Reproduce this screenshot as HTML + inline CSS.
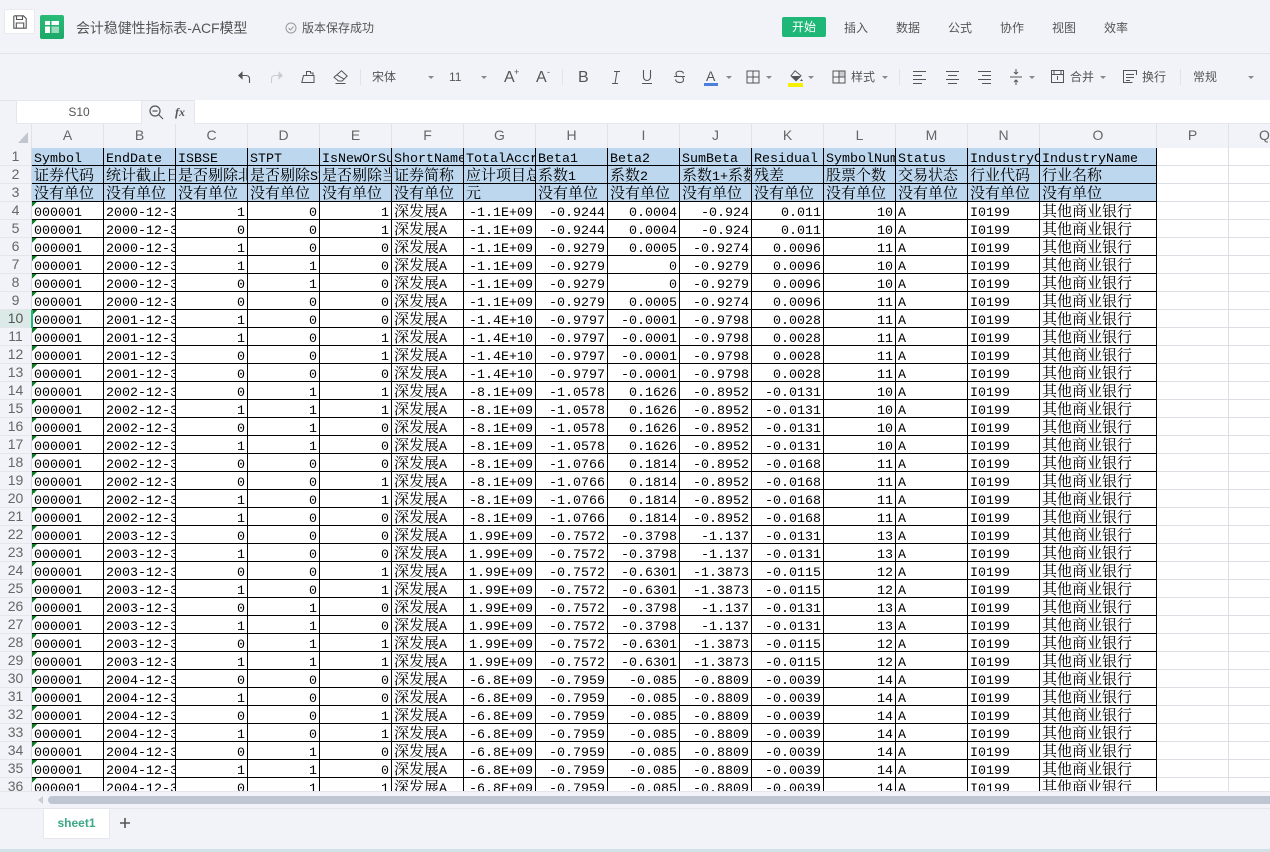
<!DOCTYPE html>
<html lang="zh"><head><meta charset="utf-8"><title>会计稳健性指标表-ACF模型</title>
<style>
html,body{margin:0;padding:0;width:1270px;height:852px;overflow:hidden;background:#f1f3f8;font-family:"Liberation Sans","Noto Sans CJK SC",sans-serif;color:#555}
.a{position:absolute}
.t{position:absolute;white-space:nowrap;font-size:12px;line-height:16px;color:#555}
svg{position:absolute;overflow:visible}
.sep{position:absolute;top:69px;width:1px;height:16px;background:#dfe2e8}
.car{position:absolute;top:76px;width:0;height:0;border-left:3.5px solid transparent;border-right:3.5px solid transparent;border-top:3.5px solid #888}
.ch{position:absolute;top:124px;height:24px;line-height:23px;text-align:center;font-size:14px;color:#666;border-right:1px solid #dfe2e7;box-sizing:border-box}
#rh{position:absolute;left:0;top:148px;width:32px;height:643px;overflow:hidden;background:#f1f3f8;border-right:1px solid #d5d9df;box-sizing:border-box}
#rh div{height:17px;border-bottom:1px solid #e3e6eb;line-height:17px;text-align:center;font-size:14px;color:#666;width:31px}
#rh div.on{background:#dbeae6;color:#555}
#g{position:absolute;left:32px;top:148px;width:1238px;height:643px;overflow:hidden;background:#fff}
table{display:block;width:1300px;position:absolute;left:0;top:0}
colgroup{display:none}
tbody{display:block}
tr{display:flex;height:18px}
td{display:block;flex:none;width:72px;height:18px;box-sizing:border-box;padding:0 0 0 2px;border-right:1px solid #000;border-bottom:1px solid #000;overflow:hidden;white-space:nowrap;font:13.33px/23px "Liberation Mono",monospace;color:#000}
td:nth-child(15){width:117px}
td.c{font:15px/18px "WenQuanYi Zen Hei","Noto Serif CJK SC",serif}
td b{font:13.33px/0 "Liberation Mono",monospace}
td.r{text-align:right;padding:0 2px 0 0}
tr.h td{background:#bdd7ee}
td:first-child{background:linear-gradient(135deg,#0a7d22 50%,transparent 50%) 0 0/5px 5px no-repeat}
tr.h td:first-child{background:#bdd7ee}
td.e,tr.h td.e{border-right:1px solid #dcdfe3;border-bottom:1px solid #dcdfe3;background:#fff}
</style></head><body>
<div class="a" style="left:0;top:53px;width:1270px;height:1px;background:#e0e3e9"></div>
<div class="a" style="left:4px;top:9px;width:31px;height:25px;background:#fff;border:1px solid #e8eaee;box-sizing:border-box;border-radius:2px"></div>
<svg style="left:13px;top:15px" width="14" height="14" viewBox="0 0 14 14" fill="none" stroke="#555" stroke-width="1.1"><path d="M1.500.8h9l2.700 2.700v9.700H.8V1.500z"/><path d="M3.500 1v3.500h6V1M3.300 13V8h7.400v5"/></svg>
<div class="a" style="left:40px;top:15px;width:24px;height:24px;border-radius:2px;background:linear-gradient(180deg,#29bb78,#1da968)"></div>
<svg style="left:45px;top:21px" width="14" height="12"><path d="M0 0h5v4H0zM6.500 0H14v4H6.500zM0 5.500h5V12H0z" fill="#fff"/><path d="M6.500 5.500H14V12H6.500z" fill="#fff" opacity=".55"/></svg>
<div class="t" style="left:76px;top:19px;font-size:14px;line-height:18px;color:#555;letter-spacing:-.1px">会计稳健性指标表-ACF模型</div>
<svg style="left:285px;top:22px" width="12" height="12" fill="none" stroke="#999"><circle cx="6" cy="6" r="5"/><path d="M3.500 6l2 2 3-3.500"/></svg>
<div class="t" style="left:302px;top:20px">版本保存成功</div>
<div class="a" style="left:782px;top:17px;width:44px;height:20px;background:#1fb777;border-radius:2px;color:#fff;font-size:12px;line-height:20px;text-align:center">开始</div>
<div class="t" style="left:844px;top:20px">插入</div><div class="t" style="left:896px;top:20px">数据</div><div class="t" style="left:948px;top:20px">公式</div><div class="t" style="left:1000px;top:20px">协作</div><div class="t" style="left:1052px;top:20px">视图</div><div class="t" style="left:1104px;top:20px">效率</div>

<svg style="left:238px;top:71px" width="13" height="13" fill="none" stroke="#555" stroke-width="1.1"><path d="M3 4.500h5c2.500 0 3.500 1.500 3.500 3.500v4"/><path d="M4 1.500L.8 4.500 4 7.500z" fill="#555"/></svg>
<svg style="left:270px;top:71px" width="13" height="13" fill="none" stroke="#c8ccd3" stroke-width="1.1"><path d="M10 4.500H5C2.500 4.500 1.500 6 1.500 8v4"/><path d="M9 1.500l3.200 3L9 7.500z" fill="#c8ccd3"/></svg>
<svg style="left:301px;top:70px" width="14" height="14" fill="none" stroke="#555" stroke-width="1"><path d="M2.500 5.500h10.500v7H.8zM5.500 5.500V1.500h4v1.500h2.500v2.500M1 12.500h12"/></svg>
<svg style="left:333px;top:70px" width="15" height="14" fill="none" stroke="#555" stroke-width="1"><path d="M8.500.8l5.700 5.200-5 5H5.500L1 7.300zM3.800 4.800l7.400 4.400M2.500 13.500h10"/></svg>
<div class="sep" style="left:360px"></div>
<div class="t" style="left:372px;top:69px">宋体</div><div class="car" style="left:428px"></div>
<div class="t" style="left:449px;top:69px">11</div><div class="car" style="left:481px"></div>
<div class="t" style="left:504px;top:69px;font-size:16px;line-height:17px">A</div><div class="t" style="left:514px;top:64px;font-size:9px">+</div>
<div class="t" style="left:536px;top:69px;font-size:16px;line-height:17px">A</div><div class="t" style="left:547px;top:64px;font-size:9px">-</div>
<div class="sep" style="left:562px"></div>
<div class="t" style="left:578px;top:69px;font-size:16px;line-height:17px">B</div>
<svg style="left:612px;top:71px" width="8" height="13" fill="none" stroke="#555" stroke-width="1"><path d="M2 .5h6M0 12.500h6M5 .5L3 12.500"/></svg>
<svg style="left:642px;top:70px" width="10" height="14" fill="none" stroke="#555" stroke-width="1.1"><path d="M1.500 0v7a3.500 3.500 0 0 0 7 0V0M0 13.500h10"/></svg>
<svg style="left:674px;top:70px" width="11" height="14" fill="none" stroke="#555" stroke-width="1.1"><path d="M9.500 3.500C9 .5 2 .5 2 3.500c0 1 .5 2 1 3M8.500 7c1 1 1 2 1 3 0 3.500-7.500 3.500-8-.5M0 6.500h11"/></svg>
<div class="t" style="left:706px;top:68px;font-size:14px">A</div><div class="a" style="left:704px;top:83px;width:14px;height:3px;background:#4a7fdc"></div><div class="car" style="left:726px"></div>
<svg style="left:746px;top:70px" width="14" height="14" fill="none" stroke="#555" stroke-width="1"><path d="M1 1h12v12H1zM7 1v12M1 7h12"/></svg><div class="car" style="left:766px"></div>
<svg style="left:789px;top:70px" width="14" height="13" fill="#555"><path d="M6 .8l6 5-5 5-5-5z" fill="none" stroke="#555"/><path d="M2 6h10l-5 5zM12.500 9l1.500 2h-3z"/></svg><div class="a" style="left:788px;top:83px;width:15px;height:4px;background:#f5f000"></div><div class="car" style="left:808px"></div>
<svg style="left:832px;top:70px" width="14" height="14" fill="none" stroke="#555" stroke-width="1"><path d="M7 1h6v6H7z" fill="#c8ccd4"/><path d="M1 1h12v12H1zM7 1v12M1 7h12"/></svg>
<div class="t" style="left:851px;top:69px">样式</div><div class="car" style="left:882px"></div>
<div class="sep" style="left:899px"></div>
<svg style="left:913px;top:70px" width="13" height="14" stroke="#555"><path d="M0 1.500h13M0 5.500h9M0 9.500h13M0 13.500h9"/></svg>
<svg style="left:946px;top:70px" width="13" height="14" stroke="#555"><path d="M0 1.500h13M2 5.500h9M0 9.500h13M2 13.500h9"/></svg>
<svg style="left:978px;top:70px" width="13" height="14" stroke="#555"><path d="M0 1.500h13M4 5.500h9M0 9.500h13M4 13.500h9"/></svg>
<svg style="left:1010px;top:69px" width="12" height="16" fill="none" stroke="#555"><path d="M0 8h12M6 0v5M6 11v5M4 3l2 2 2-2M4 13l2-2 2 2"/></svg><div class="car" style="left:1029px"></div>
<svg style="left:1051px;top:70px" width="13" height="13" fill="none" stroke="#555"><path d="M.5.500h12v12H.500zM.5 4.500h12M6.500 6v4M3 .5v4M10 .5v4"/></svg>
<div class="t" style="left:1070px;top:69px">合并</div><div class="car" style="left:1100px"></div>
<svg style="left:1123px;top:70px" width="14" height="13" fill="none" stroke="#555"><path d="M13.500 5V.5H.5v12h9M3 4.500h8M3 7.500h8M3 10.500h4"/></svg>
<div class="t" style="left:1142px;top:69px">换行</div>
<div class="sep" style="left:1180px"></div>
<div class="t" style="left:1193px;top:69px">常规</div><div class="car" style="left:1248px"></div>

<div class="a" style="left:0;top:100px;width:1270px;height:1px;background:#e0e3e9"></div>
<div class="a" style="left:16px;top:100px;width:126px;height:24px;background:#fff;border:1px solid #e4e7ec;box-sizing:border-box;font-size:12px;line-height:23px;text-align:center;color:#555">S10</div>
<svg style="left:149px;top:105px" width="15" height="15" fill="none" stroke="#555" stroke-width="1.200"><circle cx="6" cy="6" r="5"/><path d="M3.500 6h5M10 10l4 4"/></svg>
<div class="t" style="left:175px;top:104px;font:italic bold 12px/16px 'Liberation Serif',serif;color:#555">fx</div>
<div class="a" style="left:194px;top:100px;width:1076px;height:24px;background:#fff;border-left:1px solid #e4e7ec;border-bottom:1px solid #e4e7ec;box-sizing:border-box"></div>

<div class="ch" style="left:0;width:32px"></div>
<svg style="left:18px;top:132px" width="10" height="11"><path d="M10 0v11H0z" fill="#c2c7cf"/></svg>
<div class="ch" style="left:32px;width:72px">A</div><div class="ch" style="left:104px;width:72px">B</div><div class="ch" style="left:176px;width:72px">C</div><div class="ch" style="left:248px;width:72px">D</div><div class="ch" style="left:320px;width:72px">E</div><div class="ch" style="left:392px;width:72px">F</div><div class="ch" style="left:464px;width:72px">G</div><div class="ch" style="left:536px;width:72px">H</div><div class="ch" style="left:608px;width:72px">I</div><div class="ch" style="left:680px;width:72px">J</div><div class="ch" style="left:752px;width:72px">K</div><div class="ch" style="left:824px;width:72px">L</div><div class="ch" style="left:896px;width:72px">M</div><div class="ch" style="left:968px;width:72px">N</div><div class="ch" style="left:1040px;width:117px">O</div><div class="ch" style="left:1157px;width:72px">P</div><div class="ch" style="left:1229px;width:72px">Q</div>
<div id="rh"><div>1</div><div>2</div><div>3</div><div>4</div><div>5</div><div>6</div><div>7</div><div>8</div><div>9</div><div class="on">10</div><div>11</div><div>12</div><div>13</div><div>14</div><div>15</div><div>16</div><div>17</div><div>18</div><div>19</div><div>20</div><div>21</div><div>22</div><div>23</div><div>24</div><div>25</div><div>26</div><div>27</div><div>28</div><div>29</div><div>30</div><div>31</div><div>32</div><div>33</div><div>34</div><div>35</div><div>36</div></div>
<div id="g"><table>
<tr class="h"><td>Symbol<td>EndDate<td>ISBSE<td>STPT<td>IsNewOrSu<td>ShortName<td>TotalAccr<td>Beta1<td>Beta2<td>SumBeta<td>Residual<td>SymbolNum<td>Status<td>IndustryC<td>IndustryName<td class="e"><td class="e"></tr>
<tr class="h"><td class="c">证券代码<td class="c">统计截止日<td class="c">是否剔除北<td class="c">是否剔除<b>ST</b><td class="c">是否剔除当<td class="c">证券简称<td class="c">应计项目总<td class="c">系数<b>1</b><td class="c">系数<b>2</b><td class="c">系数<b>1+</b>系数<td class="c">残差<td class="c">股票个数<td class="c">交易状态<td class="c">行业代码<td class="c">行业名称<td class="e"><td class="e"></tr>
<tr class="h"><td class="c">没有单位<td class="c">没有单位<td class="c">没有单位<td class="c">没有单位<td class="c">没有单位<td class="c">没有单位<td class="c">元<td class="c">没有单位<td class="c">没有单位<td class="c">没有单位<td class="c">没有单位<td class="c">没有单位<td class="c">没有单位<td class="c">没有单位<td class="c">没有单位<td class="e"><td class="e"></tr>
<tr><td>000001<td>2000-12-31<td class="r">1<td class="r">0<td class="r">1<td class="c">深发展<b>A</b><td class="r">-1.1E+09<td class="r">-0.9244<td class="r">0.0004<td class="r">-0.924<td class="r">0.011<td class="r">10<td>A<td>I0199<td class="c">其他商业银行<td class="e"><td class="e"></tr>
<tr><td>000001<td>2000-12-31<td class="r">0<td class="r">0<td class="r">1<td class="c">深发展<b>A</b><td class="r">-1.1E+09<td class="r">-0.9244<td class="r">0.0004<td class="r">-0.924<td class="r">0.011<td class="r">10<td>A<td>I0199<td class="c">其他商业银行<td class="e"><td class="e"></tr>
<tr><td>000001<td>2000-12-31<td class="r">1<td class="r">0<td class="r">0<td class="c">深发展<b>A</b><td class="r">-1.1E+09<td class="r">-0.9279<td class="r">0.0005<td class="r">-0.9274<td class="r">0.0096<td class="r">11<td>A<td>I0199<td class="c">其他商业银行<td class="e"><td class="e"></tr>
<tr><td>000001<td>2000-12-31<td class="r">1<td class="r">1<td class="r">0<td class="c">深发展<b>A</b><td class="r">-1.1E+09<td class="r">-0.9279<td class="r">0<td class="r">-0.9279<td class="r">0.0096<td class="r">10<td>A<td>I0199<td class="c">其他商业银行<td class="e"><td class="e"></tr>
<tr><td>000001<td>2000-12-31<td class="r">0<td class="r">1<td class="r">0<td class="c">深发展<b>A</b><td class="r">-1.1E+09<td class="r">-0.9279<td class="r">0<td class="r">-0.9279<td class="r">0.0096<td class="r">10<td>A<td>I0199<td class="c">其他商业银行<td class="e"><td class="e"></tr>
<tr><td>000001<td>2000-12-31<td class="r">0<td class="r">0<td class="r">0<td class="c">深发展<b>A</b><td class="r">-1.1E+09<td class="r">-0.9279<td class="r">0.0005<td class="r">-0.9274<td class="r">0.0096<td class="r">11<td>A<td>I0199<td class="c">其他商业银行<td class="e"><td class="e"></tr>
<tr><td>000001<td>2001-12-31<td class="r">1<td class="r">0<td class="r">0<td class="c">深发展<b>A</b><td class="r">-1.4E+10<td class="r">-0.9797<td class="r">-0.0001<td class="r">-0.9798<td class="r">0.0028<td class="r">11<td>A<td>I0199<td class="c">其他商业银行<td class="e"><td class="e"></tr>
<tr><td>000001<td>2001-12-31<td class="r">1<td class="r">0<td class="r">1<td class="c">深发展<b>A</b><td class="r">-1.4E+10<td class="r">-0.9797<td class="r">-0.0001<td class="r">-0.9798<td class="r">0.0028<td class="r">11<td>A<td>I0199<td class="c">其他商业银行<td class="e"><td class="e"></tr>
<tr><td>000001<td>2001-12-31<td class="r">0<td class="r">0<td class="r">1<td class="c">深发展<b>A</b><td class="r">-1.4E+10<td class="r">-0.9797<td class="r">-0.0001<td class="r">-0.9798<td class="r">0.0028<td class="r">11<td>A<td>I0199<td class="c">其他商业银行<td class="e"><td class="e"></tr>
<tr><td>000001<td>2001-12-31<td class="r">0<td class="r">0<td class="r">0<td class="c">深发展<b>A</b><td class="r">-1.4E+10<td class="r">-0.9797<td class="r">-0.0001<td class="r">-0.9798<td class="r">0.0028<td class="r">11<td>A<td>I0199<td class="c">其他商业银行<td class="e"><td class="e"></tr>
<tr><td>000001<td>2002-12-31<td class="r">0<td class="r">1<td class="r">1<td class="c">深发展<b>A</b><td class="r">-8.1E+09<td class="r">-1.0578<td class="r">0.1626<td class="r">-0.8952<td class="r">-0.0131<td class="r">10<td>A<td>I0199<td class="c">其他商业银行<td class="e"><td class="e"></tr>
<tr><td>000001<td>2002-12-31<td class="r">1<td class="r">1<td class="r">1<td class="c">深发展<b>A</b><td class="r">-8.1E+09<td class="r">-1.0578<td class="r">0.1626<td class="r">-0.8952<td class="r">-0.0131<td class="r">10<td>A<td>I0199<td class="c">其他商业银行<td class="e"><td class="e"></tr>
<tr><td>000001<td>2002-12-31<td class="r">0<td class="r">1<td class="r">0<td class="c">深发展<b>A</b><td class="r">-8.1E+09<td class="r">-1.0578<td class="r">0.1626<td class="r">-0.8952<td class="r">-0.0131<td class="r">10<td>A<td>I0199<td class="c">其他商业银行<td class="e"><td class="e"></tr>
<tr><td>000001<td>2002-12-31<td class="r">1<td class="r">1<td class="r">0<td class="c">深发展<b>A</b><td class="r">-8.1E+09<td class="r">-1.0578<td class="r">0.1626<td class="r">-0.8952<td class="r">-0.0131<td class="r">10<td>A<td>I0199<td class="c">其他商业银行<td class="e"><td class="e"></tr>
<tr><td>000001<td>2002-12-31<td class="r">0<td class="r">0<td class="r">0<td class="c">深发展<b>A</b><td class="r">-8.1E+09<td class="r">-1.0766<td class="r">0.1814<td class="r">-0.8952<td class="r">-0.0168<td class="r">11<td>A<td>I0199<td class="c">其他商业银行<td class="e"><td class="e"></tr>
<tr><td>000001<td>2002-12-31<td class="r">0<td class="r">0<td class="r">1<td class="c">深发展<b>A</b><td class="r">-8.1E+09<td class="r">-1.0766<td class="r">0.1814<td class="r">-0.8952<td class="r">-0.0168<td class="r">11<td>A<td>I0199<td class="c">其他商业银行<td class="e"><td class="e"></tr>
<tr><td>000001<td>2002-12-31<td class="r">1<td class="r">0<td class="r">1<td class="c">深发展<b>A</b><td class="r">-8.1E+09<td class="r">-1.0766<td class="r">0.1814<td class="r">-0.8952<td class="r">-0.0168<td class="r">11<td>A<td>I0199<td class="c">其他商业银行<td class="e"><td class="e"></tr>
<tr><td>000001<td>2002-12-31<td class="r">1<td class="r">0<td class="r">0<td class="c">深发展<b>A</b><td class="r">-8.1E+09<td class="r">-1.0766<td class="r">0.1814<td class="r">-0.8952<td class="r">-0.0168<td class="r">11<td>A<td>I0199<td class="c">其他商业银行<td class="e"><td class="e"></tr>
<tr><td>000001<td>2003-12-31<td class="r">0<td class="r">0<td class="r">0<td class="c">深发展<b>A</b><td class="r">1.99E+09<td class="r">-0.7572<td class="r">-0.3798<td class="r">-1.137<td class="r">-0.0131<td class="r">13<td>A<td>I0199<td class="c">其他商业银行<td class="e"><td class="e"></tr>
<tr><td>000001<td>2003-12-31<td class="r">1<td class="r">0<td class="r">0<td class="c">深发展<b>A</b><td class="r">1.99E+09<td class="r">-0.7572<td class="r">-0.3798<td class="r">-1.137<td class="r">-0.0131<td class="r">13<td>A<td>I0199<td class="c">其他商业银行<td class="e"><td class="e"></tr>
<tr><td>000001<td>2003-12-31<td class="r">0<td class="r">0<td class="r">1<td class="c">深发展<b>A</b><td class="r">1.99E+09<td class="r">-0.7572<td class="r">-0.6301<td class="r">-1.3873<td class="r">-0.0115<td class="r">12<td>A<td>I0199<td class="c">其他商业银行<td class="e"><td class="e"></tr>
<tr><td>000001<td>2003-12-31<td class="r">1<td class="r">0<td class="r">1<td class="c">深发展<b>A</b><td class="r">1.99E+09<td class="r">-0.7572<td class="r">-0.6301<td class="r">-1.3873<td class="r">-0.0115<td class="r">12<td>A<td>I0199<td class="c">其他商业银行<td class="e"><td class="e"></tr>
<tr><td>000001<td>2003-12-31<td class="r">0<td class="r">1<td class="r">0<td class="c">深发展<b>A</b><td class="r">1.99E+09<td class="r">-0.7572<td class="r">-0.3798<td class="r">-1.137<td class="r">-0.0131<td class="r">13<td>A<td>I0199<td class="c">其他商业银行<td class="e"><td class="e"></tr>
<tr><td>000001<td>2003-12-31<td class="r">1<td class="r">1<td class="r">0<td class="c">深发展<b>A</b><td class="r">1.99E+09<td class="r">-0.7572<td class="r">-0.3798<td class="r">-1.137<td class="r">-0.0131<td class="r">13<td>A<td>I0199<td class="c">其他商业银行<td class="e"><td class="e"></tr>
<tr><td>000001<td>2003-12-31<td class="r">0<td class="r">1<td class="r">1<td class="c">深发展<b>A</b><td class="r">1.99E+09<td class="r">-0.7572<td class="r">-0.6301<td class="r">-1.3873<td class="r">-0.0115<td class="r">12<td>A<td>I0199<td class="c">其他商业银行<td class="e"><td class="e"></tr>
<tr><td>000001<td>2003-12-31<td class="r">1<td class="r">1<td class="r">1<td class="c">深发展<b>A</b><td class="r">1.99E+09<td class="r">-0.7572<td class="r">-0.6301<td class="r">-1.3873<td class="r">-0.0115<td class="r">12<td>A<td>I0199<td class="c">其他商业银行<td class="e"><td class="e"></tr>
<tr><td>000001<td>2004-12-31<td class="r">0<td class="r">0<td class="r">0<td class="c">深发展<b>A</b><td class="r">-6.8E+09<td class="r">-0.7959<td class="r">-0.085<td class="r">-0.8809<td class="r">-0.0039<td class="r">14<td>A<td>I0199<td class="c">其他商业银行<td class="e"><td class="e"></tr>
<tr><td>000001<td>2004-12-31<td class="r">1<td class="r">0<td class="r">0<td class="c">深发展<b>A</b><td class="r">-6.8E+09<td class="r">-0.7959<td class="r">-0.085<td class="r">-0.8809<td class="r">-0.0039<td class="r">14<td>A<td>I0199<td class="c">其他商业银行<td class="e"><td class="e"></tr>
<tr><td>000001<td>2004-12-31<td class="r">0<td class="r">0<td class="r">1<td class="c">深发展<b>A</b><td class="r">-6.8E+09<td class="r">-0.7959<td class="r">-0.085<td class="r">-0.8809<td class="r">-0.0039<td class="r">14<td>A<td>I0199<td class="c">其他商业银行<td class="e"><td class="e"></tr>
<tr><td>000001<td>2004-12-31<td class="r">1<td class="r">0<td class="r">1<td class="c">深发展<b>A</b><td class="r">-6.8E+09<td class="r">-0.7959<td class="r">-0.085<td class="r">-0.8809<td class="r">-0.0039<td class="r">14<td>A<td>I0199<td class="c">其他商业银行<td class="e"><td class="e"></tr>
<tr><td>000001<td>2004-12-31<td class="r">0<td class="r">1<td class="r">0<td class="c">深发展<b>A</b><td class="r">-6.8E+09<td class="r">-0.7959<td class="r">-0.085<td class="r">-0.8809<td class="r">-0.0039<td class="r">14<td>A<td>I0199<td class="c">其他商业银行<td class="e"><td class="e"></tr>
<tr><td>000001<td>2004-12-31<td class="r">1<td class="r">1<td class="r">0<td class="c">深发展<b>A</b><td class="r">-6.8E+09<td class="r">-0.7959<td class="r">-0.085<td class="r">-0.8809<td class="r">-0.0039<td class="r">14<td>A<td>I0199<td class="c">其他商业银行<td class="e"><td class="e"></tr>
<tr><td>000001<td>2004-12-31<td class="r">0<td class="r">1<td class="r">1<td class="c">深发展<b>A</b><td class="r">-6.8E+09<td class="r">-0.7959<td class="r">-0.085<td class="r">-0.8809<td class="r">-0.0039<td class="r">14<td>A<td>I0199<td class="c">其他商业银行<td class="e"><td class="e"></tr>
</table></div>
<div class="a" style="left:31px;top:310px;width:2px;height:18px;background:#1fb777"></div>
<div class="a" style="left:0;top:791px;width:1270px;height:17px;background:#f1f3f8;border-top:1px solid #e3e6eb;box-sizing:border-box"></div>
<svg style="left:38px;top:796px" width="5" height="8"><path d="M5 0v8L0 4z" fill="#c8ccd4"/></svg>
<div class="a" style="left:48px;top:796px;width:1222px;height:8px;background:#bfc6d1;border-radius:4px 0 0 4px"></div>
<div class="a" style="left:0;top:808px;width:1270px;height:1px;background:#e3e6eb"></div>
<div class="a" style="left:43px;top:809px;width:67px;height:30px;background:#fff;border:1px solid #e6e8ed;border-top:0;box-sizing:border-box;color:#3aa886;font-size:12px;font-weight:bold;line-height:28px;text-align:center">sheet1</div>
<svg style="left:120px;top:818px" width="10" height="10"><path d="M5 0v10M0 5h10" stroke="#555" stroke-width="1.600"/></svg>
<div class="a" style="left:0;top:849px;width:1270px;height:3px;background:#cfe3e6"></div>
</body></html>
